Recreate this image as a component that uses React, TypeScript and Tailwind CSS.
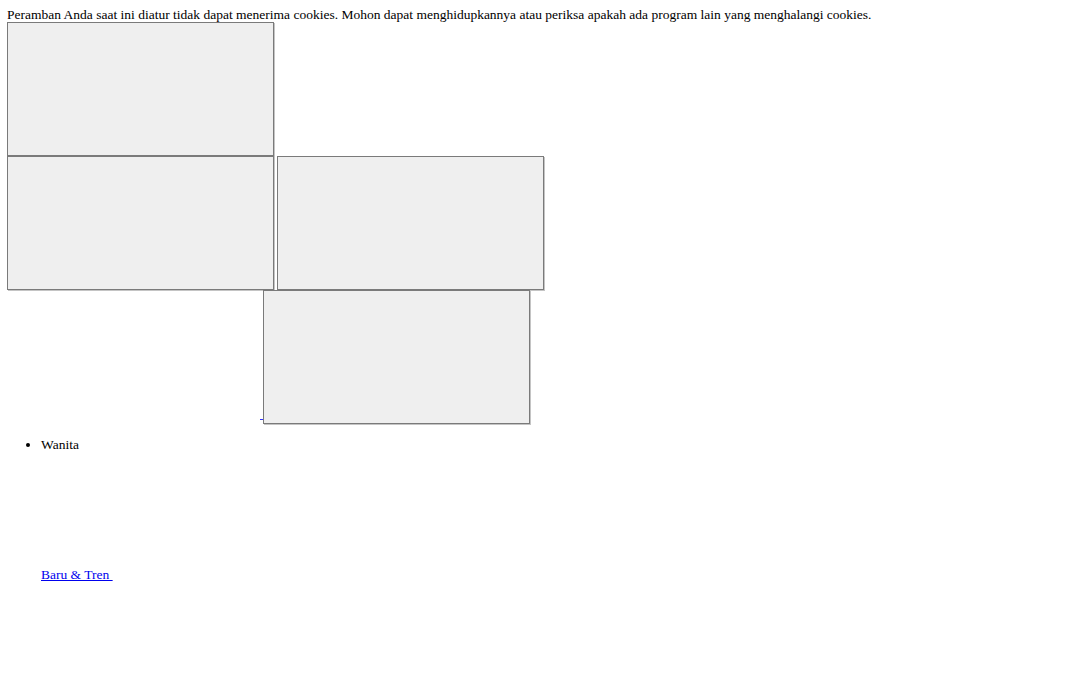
function Frame({ className = '' }: { className?: string }) {
  return (
    <div
      className={`w-[267px] h-[134px] bg-[#efefef] border border-[#7a7a7a] shadow-[1px_1px_0_#c4c4c4] shrink-0 ${className}`}
    />
  );
}

export default function App() {
  return (
    <div className="min-h-screen bg-white text-black font-['Liberation_Serif',serif] text-[13.5px] pl-[7px] pt-[7px]">
      <div className="leading-[15px] whitespace-nowrap">
        Peramban Anda saat ini diatur tidak dapat menerima cookies. Mohon dapat menghidupkannya atau
        periksa apakah ada program lain yang menghalangi cookies.
      </div>

      <Frame />
      <div className="flex gap-[3px]">
        <Frame />
        <Frame />
      </div>
      <div className="flex items-end">
        <span className="ml-[253px] mb-[4px] w-[3px] h-[1px] bg-[#3333ff]" />
        <Frame />
      </div>

      <ul className="list-disc pl-[34px] mt-[13px]">
        <li className="leading-[16px]">Wanita</li>
      </ul>

      <div className="pl-[34px] mt-[114px] leading-[16px]">
        <a href="#" className="text-[#0000ee] underline">
          Baru &amp; Tren&nbsp;
        </a>
      </div>
    </div>
  );
}
